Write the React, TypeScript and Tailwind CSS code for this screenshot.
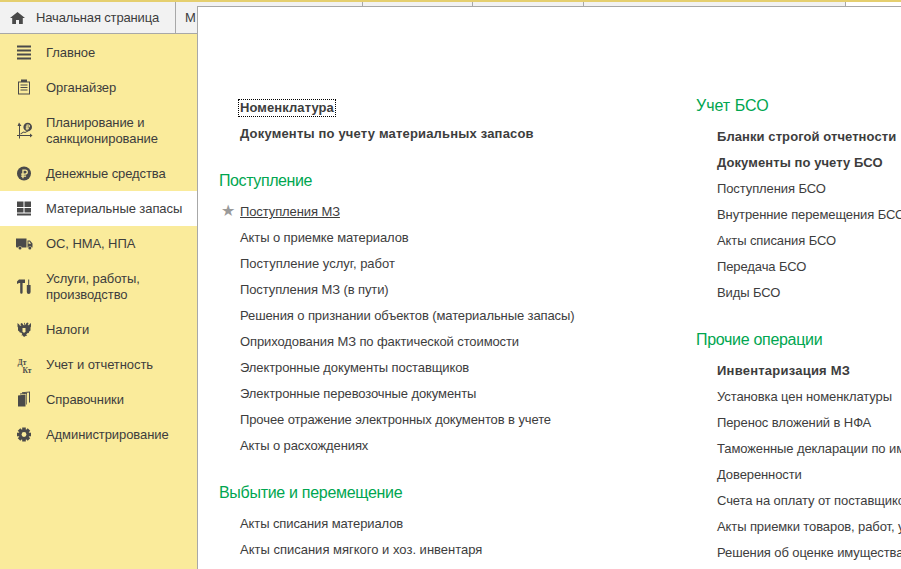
import type { ReactNode } from "react";

const Icon = ({ children }: { children: ReactNode }) => (
  <svg width="18" height="18" viewBox="0 0 18 18" fill="#4a4a4a" className="shrink-0 overflow-visible">
    {children}
  </svg>
);

const menu: { label: string[]; icon: ReactNode; h: string; active?: boolean }[] = [
  {
    label: ["Главное"],
    h: "h-[35px]",
    icon: (
      <Icon>
        <path d="M0 1.500h14v2H0zM0 5.500h14v2H0zM0 9.500h14v2H0zM0 13.500h14v2H0z" />
      </Icon>
    ),
  },
  {
    label: ["Органайзер"],
    h: "h-[35px]",
    icon: (
      <Icon>
        <path d="M1 2.500h3V.5h6v2h3v13H1zM2 3.500v11h10v-11z" fillRule="evenodd" />
        <path d="M3.500 5.500h7v1h-7zM3.500 8h7v1h-7zM3.500 10.500h7v1h-7z" />
      </Icon>
    ),
  },
  {
    label: ["Планирование и", "санкционирование"],
    h: "h-[51px]",
    icon: (
      <Icon>
        <path d="M2 .5L4.500 4H3v9h10v-1.500l2.500 2-2.500 2V14H3v2.500H2V14H0v-1h2V4H.5z" />
        <path d="M3.500 11.500l3-2 1.500.5 3-1.500.4.800-3.300 1.700-1.500-.5-3 2z" />
        <circle cx="10.700" cy="5" r="4.300" />
        <path d="M9.500 2.500h2a1.500 1.500 0 010 3h-1v.8h1.500v.9H10.500V8.300H9.500V7.200h-.8v-.9h.8v-.8h-.8v-.9h.8zM10.500 3.400v1.200h1a.6.6 0 000-1.200z" fill="#faeb9b" fillRule="evenodd" />
      </Icon>
    ),
  },
  {
    label: ["Денежные средства"],
    h: "h-[35px]",
    icon: (
      <Icon>
        <circle cx="7" cy="8.500" r="7" />
        <path
          d="M5.300 4.500h3a2.600 2.600 0 010 5.200H6.600v.9h2.500v1.100H6.600v1.600H5.300v-1.600H4.100v-1.100h1.200v-.9H4.100V8.500h1.200zM6.600 5.700v2.800h1.600a1.400 1.400 0 000-2.800z"
          fill="#faeb9b"
          fillRule="evenodd"
        />
      </Icon>
    ),
  },
  {
    label: ["Материальные запасы"],
    h: "h-[35px]",
    active: true,
    icon: (
      <Icon>
        <path d="M0 1.500h6.500v5.500H0zM7.500 1.500H14v5.500H7.500zM0 8h6.500v4.500H0zM7.500 8H14v4.500H7.500zM0 13.500h14v2H0z" />
      </Icon>
    ),
  },
  {
    label: ["ОС, НМА, НПА"],
    h: "h-[35px]",
    icon: (
      <Icon>
        <path d="M-1 3.500h10.500v9H5a2.200 2.200 0 00-4 0H0a1 1 0 01-1-1z" />
        <path d="M10.500 5.500h2.500l2.500 3v4h-.7a2.200 2.200 0 00-3.900 0h-.4zM11.500 6.500v2.200h2.600l-1.700-2.200z" fillRule="evenodd" />
        <circle cx="3" cy="13" r="1.500" />
        <circle cx="12.800" cy="13" r="1.500" />
      </Icon>
    ),
  },
  {
    label: ["Услуги, работы,", "производство"],
    h: "h-[51px]",
    icon: (
      <Icon>
        <path d="M0 3.500l2-2h6v3.500H5.600v9.500a1.200 1.200 0 01-2.400 0V5H2L0 6z" />
        <path d="M11.200 1.500h1v5.500h-1zM9.800 7h3.800v7a1.900 1.900 0 01-3.800 0z" />
      </Icon>
    ),
  },
  {
    label: ["Налоги"],
    h: "h-[35px]",
    icon: (
      <Icon>
        <path d="M7 1.500l1 1-.3 1.500 1-.5.8-1.500 1.500-.5.500 1.500-1 1 1.500.3.800-1.300L14 2v3.500l-.5 1v3l-1.300 1-.5 1.500-1.500.3-1 1.200 1 1.500-1.200-.2L7 16l-1.500-1.700-1.200.2 1-1.500-1-1.200-1.500-.3L2.300 10.500 1 9.500v-3l-.5-1V2l1.700 1.500L3 4.800l1.500-.3-1-1 .5-1.500 1.500.5.800 1.500 1 .5L7 2.500z" />
        <path d="M5.500 7h3v3.500L7 12l-1.500-1.500z" fill="#faeb9b" />
      </Icon>
    ),
  },
  {
    label: ["Учет и отчетность"],
    h: "h-[35px]",
    icon: (
      <svg width="18" height="18" viewBox="0 0 18 18" className="shrink-0 overflow-visible">
        <text x="0.500" y="8.500" fontSize="7.500" fontWeight="700" fill="#4a4a4a" fontFamily="Liberation Serif, serif">
          Дт
        </text>
        <text x="5.500" y="16.500" fontSize="7.500" fontWeight="700" fill="#4a4a4a" fontFamily="Liberation Serif, serif">
          Кт
        </text>
      </svg>
    ),
  },
  {
    label: ["Справочники"],
    h: "h-[35px]",
    icon: (
      <Icon>
        <path d="M1 4.500l7.500-1v12H1z" />
        <path d="M3 2.500l7-.8V13.500H9.300V2.800l-6.300.7z" />
        <path d="M5 1.200l8-.7v11h-1V1.600l-7 .6z" />
      </Icon>
    ),
  },
  {
    label: ["Администрирование"],
    h: "h-[35px]",
    icon: (
      <Icon>
        <g transform="translate(7 8.500)">
          {[0, 45, 90, 135].map((a) => (
            <rect key={a} x="-1.800" y="-7" width="3.600" height="14" transform={`rotate(${a})`} />
          ))}
          <circle r="5.200" />
          <circle r="2.400" fill="#faeb9b" />
        </g>
      </Icon>
    ),
  },
];

const Title = ({ children, className }: { children: ReactNode; className: string }) => (
  <div className={`text-[16px] leading-[20px] text-[#00a650] ${className}`}>{children}</div>
);

const Row = ({
  children,
  bold,
  track,
}: {
  children: ReactNode;
  bold?: boolean;
  track?: string;
}) => (
  <div
    className={`h-[26px] leading-[26px] whitespace-nowrap ${bold ? "font-bold" : ""} ${
      track ?? (bold ? "tracking-[0.08px]" : "tracking-[-0.1px]")
    }`}
  >
    {children}
  </div>
);

const left = [
  "Акты о приемке материалов",
  "Поступление услуг, работ",
  "Поступления МЗ (в пути)",
  "Решения о признании объектов (материальные запасы)",
  "Оприходования МЗ по фактической стоимости",
  "Электронные документы поставщиков",
  "Электронные перевозочные документы",
  "Прочее отражение электронных документов в учете",
  "Акты о расхождениях",
];

const bso = [
  "Поступления БСО",
  "Внутренние перемещения БСО",
  "Акты списания БСО",
  "Передача БСО",
  "Виды БСО",
];

const other = [
  "Установка цен номенклатуры",
  "Перенос вложений в НФА",
  "Таможенные декларации по импорту",
  "Доверенности",
  "Счета на оплату от поставщиков",
  "Акты приемки товаров, работ, услуг",
  "Решения об оценке имущества",
];

export default function App() {
  return (
    <div className="h-[569px] w-[901px] overflow-hidden flex flex-col bg-[#faeb9b] text-[13px] text-[#3d3d3d] font-['Liberation_Sans',Arial,sans-serif]">
      <div className="h-[2px] shrink-0 bg-[#e5cf6f]" />
      <div className="h-[32px] shrink-0 flex bg-white border-b border-[#a8a8a8]">
        <div className="w-[176px] flex items-center gap-[11px] pl-[10px] bg-[#f2f2f2] border-r border-[#a8a8a8] tracking-[-0.15px]">
          <svg width="15" height="12" viewBox="0 0 15 12" fill="#4a4a4a" className="shrink-0">
            <path d="M7.500 0l7.500 6h-2.200v6H9V8H6v4H2.200V6H0z" />
          </svg>
          <span>Начальная страница</span>
        </div>
        <div className="w-[187px] pl-[9px] leading-[31px] bg-[#f2f2f2] border-r border-[#a8a8a8]">М</div>
        <div className="w-[110px] bg-[#f2f2f2] border-r border-[#a8a8a8]" />
        <div className="w-[111px] bg-[#f2f2f2] border-r border-[#a8a8a8]" />
        <div className="w-[262px] bg-[#f2f2f2] border-r border-[#a8a8a8]" />
      </div>
      <div className="flex-1 flex min-h-0">
        <nav className="w-[197px] shrink-0 pt-px">
          {menu.map((m) => (
            <div key={m.label[0]} className={`${m.h} flex items-center pl-[17px] gap-[11px] ${m.active ? "bg-white" : ""}`}>
              {m.icon}
              <div className="leading-[16px] tracking-[-0.08px]">
                {m.label.map((l) => (
                  <div key={l}>{l}</div>
                ))}
              </div>
            </div>
          ))}
        </nav>
        <main className="flex-1 -mt-[28px] z-10 bg-white border-l border-t border-[#a8a8a8] flex">
          <div className="w-[498px] shrink-0 pt-[88px] pl-[21px]">
            <div className="pl-[21px]">
              <Row bold>
                <span className="inline-block h-[18px] leading-[16px] -ml-[2px] pl-px pr-[1px] border border-dotted border-black">
                  Номенклатура
                </span>
              </Row>
              <Row bold track="tracking-[0.18px]">
                Документы по учету материальных запасов
              </Row>
            </div>
            <Title className="mt-[24px] mb-[8px] tracking-[-0.4px]">Поступление</Title>
            <div className="pl-[21px] relative">
              <Row>
                <span className="underline">Поступления МЗ</span>
              </Row>
              <span className="absolute left-[2px] top-[4px] text-[#9a9a9a] text-[16px] leading-[16px]">★</span>
              {left.map((t) => (
                <Row key={t} track={t === "Поступление услуг, работ" ? "tracking-[0px]" : undefined}>
                  {t}
                </Row>
              ))}
            </div>
            <Title className="mt-[24px] mb-[8px] tracking-[-0.3px]">Выбытие и перемещение</Title>
            <div className="pl-[21px]">
              <Row>Акты списания материалов</Row>
              <Row track="tracking-[0px]">Акты списания мягкого и хоз. инвентаря</Row>
            </div>
          </div>
          <div className="pt-[89px]">
            <Title>Учет БСО</Title>
            <div className="pl-[21px] mt-[8px]">
              <Row bold>Бланки строгой отчетности</Row>
              <Row bold>Документы по учету БСО</Row>
              {bso.map((t) => (
                <Row key={t}>{t}</Row>
              ))}
            </div>
            <Title className="mt-[24px] mb-[8px] tracking-[-0.3px]">Прочие операции</Title>
            <div className="pl-[21px]">
              <Row bold track="tracking-[0.23px]">
                Инвентаризация МЗ
              </Row>
              {other.map((t) => (
                <Row key={t}>{t}</Row>
              ))}
            </div>
          </div>
        </main>
      </div>
    </div>
  );
}
